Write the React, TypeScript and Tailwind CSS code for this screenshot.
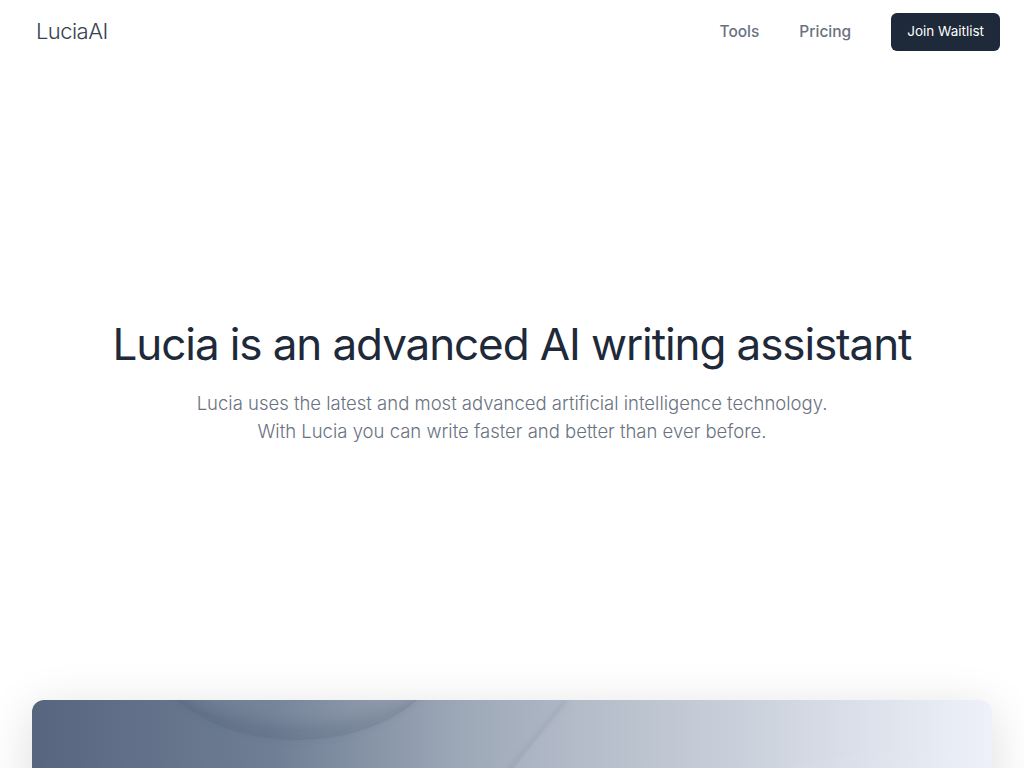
export default function App() {
  return (
    <div className="min-h-screen bg-white font-['Inter',sans-serif] text-gray-800">
      <header className="flex h-[62px] items-center justify-between pl-9 pr-6">
        <a href="#" className="text-[22px] font-light tracking-tight text-gray-700">
          LuciaAI
        </a>
        <nav className="flex items-center pt-px">
          <a href="#" className="text-[15.5px] font-medium text-gray-500">
            Tools
          </a>
          <a href="#" className="ml-10 text-[15.5px] font-medium text-gray-500">
            Pricing
          </a>
          <a
            href="#"
            className="ml-10 flex h-[38px] items-center rounded-md bg-gray-800 px-4 text-[13.5px] font-normal text-white"
          >
            Join Waitlist
          </a>
        </nav>
      </header>

      <section className="flex flex-col items-center pt-[260px] text-center">
        <h1 className="text-[44px] leading-none font-normal tracking-tight text-gray-800">
          Lucia is an advanced AI writing assistant
        </h1>
        <p className="mt-[23px] text-[18.5px] leading-7 font-light text-gray-500">
          Lucia uses the latest and most advanced artificial intelligence technology.
          <br />
          With Lucia you can write faster and better than ever before.
        </p>
      </section>

      <div className="mx-8 mt-[255px] h-[300px] overflow-hidden rounded-xl shadow-[0_10px_50px_rgba(0,0,0,0.14)]">
        <svg viewBox="0 0 960 300" preserveAspectRatio="none" className="h-full w-full">
          <defs>
            <linearGradient id="bg" x1="0" y1="0" x2="1" y2="0">
              <stop offset="0" stopColor="#57657e" />
              <stop offset="0.25" stopColor="#6f7e95" />
              <stop offset="0.45" stopColor="#9ea9b8" />
              <stop offset="0.7" stopColor="#c2c9d5" />
              <stop offset="1" stopColor="#eef1fa" />
            </linearGradient>
            <radialGradient id="arc" cx="0.5" cy="0.35" r="0.6">
              <stop offset="0" stopColor="#ffffff" stopOpacity="0.02" />
              <stop offset="0.8" stopColor="#ffffff" stopOpacity="0.05" />
              <stop offset="1" stopColor="#3e4a60" stopOpacity="0.12" />
            </radialGradient>
            <linearGradient id="shade" x1="0" y1="0" x2="0" y2="1">
              <stop offset="0" stopColor="#ffffff" stopOpacity="0" />
              <stop offset="1" stopColor="#8a95a8" stopOpacity="0.6" />
            </linearGradient>
            <filter id="blur">
              <feGaussianBlur stdDeviation="2.5" />
            </filter>
          </defs>
          <rect width="960" height="300" fill="url(#bg)" />
          <ellipse cx="265" cy="-60" rx="150" ry="100" fill="url(#arc)" />
          <ellipse
            cx="265"
            cy="-60"
            rx="150"
            ry="100"
            fill="none"
            stroke="#4a566c"
            strokeOpacity="0.15"
            strokeWidth="3"
            filter="url(#blur)"
          />
          <path
            d="M535 0 L478 68 L300 300"
            stroke="#7f8ba0"
            strokeOpacity="0.45"
            strokeWidth="2"
            fill="none"
            filter="url(#blur)"
          />
          <path d="M535 0 L960 0 L960 300 L300 300 Z" fill="#ffffff" opacity="0.05" />
          <ellipse cx="900" cy="90" rx="170" ry="40" fill="url(#shade)" opacity="0.6" />
        </svg>
      </div>
    </div>
  );
}
